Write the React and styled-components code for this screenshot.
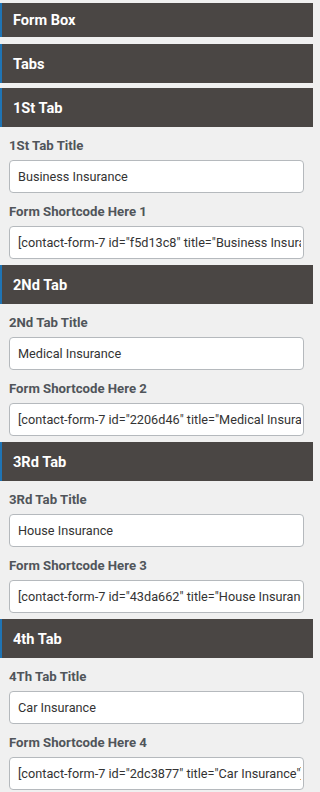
import React from "react";
import styled, { createGlobalStyle } from "styled-components";

const Global = createGlobalStyle`
  html, body { margin: 0; padding: 0; background: #f0f0f0; }
  body { font-family: Roboto, "Liberation Sans", Arial, sans-serif; }
  * { box-sizing: border-box; }
`;

const Page = styled.div`
  width: 313px;
  padding-top: 3px;
  display: flex;
  flex-direction: column;
  background: #f0f0f0;
`;

const Header = styled.div`
  height: ${(p) => p.$h || 39}px;
  margin-bottom: ${(p) => p.$mb || 0}px;
  background: #4a4644;
  border-left: 2px solid #1f74b4;
  color: #fff;
  font-weight: 700;
  font-size: 14.6px;
  display: flex;
  align-items: center;
  padding-left: 11px;
`;

const Body = styled.div`
  padding: 10px 9px 6px;
  display: flex;
  flex-direction: column;
  gap: 10px;
`;

const Field = styled.div`
  display: flex;
  flex-direction: column;
`;

const Label = styled.label`
  font-size: 13.2px;
  font-weight: 700;
  line-height: 18px;
  color: #50555a;
  margin-bottom: 5px;
`;

const Input = styled.input`
  height: 33px;
  width: 100%;
  border: 1px solid #b5b9bd;
  border-radius: 4px;
  background: #fff;
  padding: 0 2px 0 8px;
  font-family: Roboto, "Liberation Sans", Arial, sans-serif;
  font-size: 12.7px;
  color: #333;
  outline: none;
`;

const tabs = [
  { head: "1St Tab", title: "1St Tab Title", val: "Business Insurance", n: 1, code: '[contact-form-7 id="f5d13c8" title="Business Insurance"]' },
  { head: "2Nd Tab", title: "2Nd Tab Title", val: "Medical Insurance", n: 2, code: '[contact-form-7 id="2206d46" title="Medical Insurance"]' },
  { head: "3Rd Tab", title: "3Rd Tab Title", val: "House Insurance", n: 3, code: '[contact-form-7 id="43da662" title="House Insurance"]' },
  { head: "4th Tab", title: "4Th Tab Title", val: "Car Insurance", n: 4, code: '[contact-form-7 id="2dc3877" title="Car Insurance"]' },
];

export default function App() {
  return (
    <>
      <Global />
      <Page>
        <Header $h={34} $mb={7}>Form Box</Header>
        <Header $h={39} $mb={5}>Tabs</Header>
        {tabs.map((t) => (
          <React.Fragment key={t.head}>
            <Header>{t.head}</Header>
            <Body>
              <Field>
                <Label>{t.title}</Label>
                <Input readOnly value={t.val} />
              </Field>
              <Field>
                <Label>Form Shortcode Here {t.n}</Label>
                <Input readOnly value={t.code} />
              </Field>
            </Body>
          </React.Fragment>
        ))}
      </Page>
    </>
  );
}
